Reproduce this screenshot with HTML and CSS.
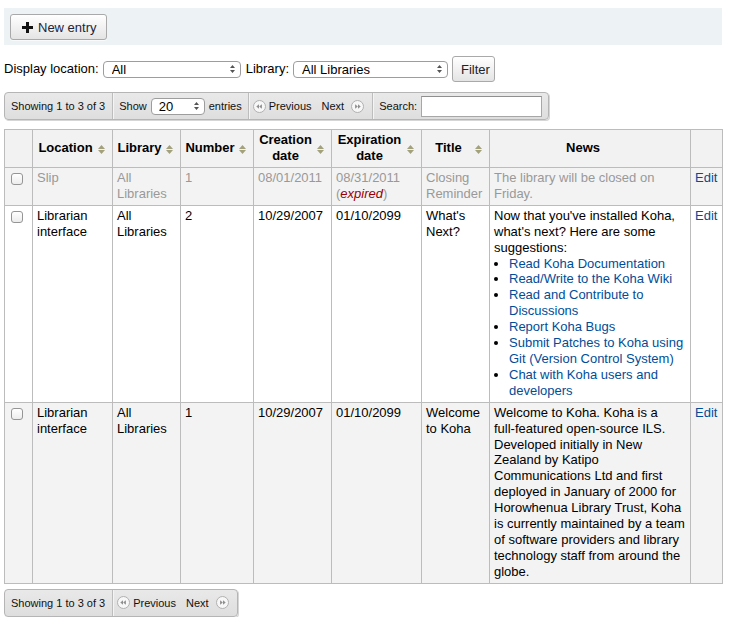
FILE: index.html
```html
<!DOCTYPE html>
<html>
<head>
<meta charset="utf-8">
<link rel="stylesheet" href="styles.css">
</head>
<body>
<div class="page">
  <div class="toolbar">
    <button class="btn btn-new"><svg class="plus" width="11" height="11" viewBox="0 0 11 11"><rect x="4" y="0" width="3" height="11" fill="#111"/><rect x="0" y="4" width="11" height="3" fill="#111"/></svg>New entry</button>
  </div>

  <form class="filters">
    <label class="lbl">Display location:</label>
    <span class="sel sel-loc"><select><option>All</option></select><svg class="updown" width="5" height="8" viewBox="0 0 5 8"><path d="M0 3 L2.5 0 L5 3Z M0 5 L5 5 L2.5 8Z" fill="#555"/></svg></span>
    <label class="lbl">Library:</label>
    <span class="sel sel-lib"><select><option>All Libraries</option></select><svg class="updown" width="5" height="8" viewBox="0 0 5 8"><path d="M0 3 L2.5 0 L5 3Z M0 5 L5 5 L2.5 8Z" fill="#555"/></svg></span>
    <button type="button" class="btn btn-filter">Filter</button>
  </form>

  <div class="pager pager-top">
    <div class="seg seg-info">Showing 1 to 3 of 3</div>
    <div class="seg seg-len">Show <span class="sel sel-len"><select><option>20</option></select><svg class="updown" width="5" height="8" viewBox="0 0 5 8"><path d="M0 3 L2.5 0 L5 3Z M0 5 L5 5 L2.5 8Z" fill="#555"/></svg></span> entries</div>
    <div class="seg seg-nav">
      <svg class="navico" width="13" height="13" viewBox="0 0 13 13"><circle cx="6.5" cy="6.5" r="6" fill="#f7f7f7" stroke="#b0b0b0"/><path d="M3.3 6.5 L6 4.3 L6 8.7Z M6.2 6.5 L8.9 4.3 L8.9 8.7Z" fill="#8f8f8f"/></svg>
      <span class="navtxt">Previous</span>
      <span class="navtxt next">Next</span>
      <svg class="navico" width="13" height="13" viewBox="0 0 13 13"><circle cx="6.5" cy="6.5" r="6" fill="#f7f7f7" stroke="#b0b0b0"/><path d="M9.7 6.5 L7 4.3 L7 8.7Z M6.8 6.5 L4.1 4.3 L4.1 8.7Z" fill="#8f8f8f"/></svg>
    </div>
    <div class="seg seg-search">Search: <input type="text" class="search"></div>
  </div>

  <table class="news">
    <colgroup>
      <col style="width:28px"><col style="width:80px"><col style="width:68px"><col style="width:73px"><col style="width:78px"><col style="width:90px"><col style="width:68px"><col style="width:201px"><col style="width:32px">
    </colgroup>
    <thead>
      <tr>
        <th class="nosort"></th>
        <th>Location<svg class="sort" width="7" height="9" viewBox="0 0 7 9"><path d="M0 4 L3.5 0 L7 4Z M0 5 L7 5 L3.5 9Z" fill="#a3a07c"/></svg></th>
        <th>Library<svg class="sort" width="7" height="9" viewBox="0 0 7 9"><path d="M0 4 L3.5 0 L7 4Z M0 5 L7 5 L3.5 9Z" fill="#a3a07c"/></svg></th>
        <th>Number<svg class="sort" width="7" height="9" viewBox="0 0 7 9"><path d="M0 4 L3.5 0 L7 4Z M0 5 L7 5 L3.5 9Z" fill="#a3a07c"/></svg></th>
        <th>Creation date<svg class="sort" width="7" height="9" viewBox="0 0 7 9"><path d="M0 4 L3.5 0 L7 4Z M0 5 L7 5 L3.5 9Z" fill="#a3a07c"/></svg></th>
        <th>Expiration date<svg class="sort" width="7" height="9" viewBox="0 0 7 9"><path d="M0 4 L3.5 0 L7 4Z M0 5 L7 5 L3.5 9Z" fill="#a3a07c"/></svg></th>
        <th>Title<svg class="sort" width="7" height="9" viewBox="0 0 7 9"><path d="M0 4 L3.5 0 L7 4Z M0 5 L7 5 L3.5 9Z" fill="#a3a07c"/></svg></th>
        <th>News</th>
        <th class="nosort"></th>
      </tr>
    </thead>
    <tbody>
      <tr class="odd expired">
        <td><span class="cb"></span></td>
        <td>Slip</td>
        <td>All Libraries</td>
        <td>1</td>
        <td>08/01/2011</td>
        <td><span class="line">08/31/2011</span><span class="line">(<em class="exp">expired</em>)</span></td>
        <td>Closing Reminder</td>
        <td>The library will be closed on Friday.</td>
        <td><a href="#">Edit</a></td>
      </tr>
      <tr class="even">
        <td><span class="cb"></span></td>
        <td>Librarian interface</td>
        <td>All Libraries</td>
        <td>2</td>
        <td>10/29/2007</td>
        <td>01/10/2099</td>
        <td>What's Next?</td>
        <td>Now that you've installed Koha, what's next? Here are some suggestions:
          <ul class="links">
            <li><a href="#">Read Koha Documentation</a></li>
            <li><a href="#">Read/Write to the Koha Wiki</a></li>
            <li><a href="#">Read and Contribute to Discussions</a></li>
            <li><a href="#">Report Koha Bugs</a></li>
            <li><a href="#">Submit Patches to Koha using Git (Version Control System)</a></li>
            <li><a href="#">Chat with Koha users and developers</a></li>
          </ul>
        </td>
        <td><a href="#">Edit</a></td>
      </tr>
      <tr class="odd">
        <td><span class="cb"></span></td>
        <td>Librarian interface</td>
        <td>All Libraries</td>
        <td>1</td>
        <td>10/29/2007</td>
        <td>01/10/2099</td>
        <td>Welcome to Koha</td>
        <td><span class="line">Welcome to Koha. Koha is a</span>full&#8209;featured open-source ILS. Developed initially in New Zealand by Katipo Communications Ltd and first deployed in January of 2000 for Horowhenua Library Trust, Koha is currently maintained by a team of software providers and library technology staff from around the globe.</td>
        <td><a href="#">Edit</a></td>
      </tr>
    </tbody>
  </table>

  <div class="pager pager-bottom">
    <div class="seg seg-info">Showing 1 to 3 of 3</div>
    <div class="seg seg-nav">
      <svg class="navico" width="13" height="13" viewBox="0 0 13 13"><circle cx="6.5" cy="6.5" r="6" fill="#f7f7f7" stroke="#b0b0b0"/><path d="M3.3 6.5 L6 4.3 L6 8.7Z M6.2 6.5 L8.9 4.3 L8.9 8.7Z" fill="#8f8f8f"/></svg>
      <span class="navtxt">Previous</span>
      <span class="navtxt next">Next</span>
      <svg class="navico" width="13" height="13" viewBox="0 0 13 13"><circle cx="6.5" cy="6.5" r="6" fill="#f7f7f7" stroke="#b0b0b0"/><path d="M9.7 6.5 L7 4.3 L7 8.7Z M6.8 6.5 L4.1 4.3 L4.1 8.7Z" fill="#8f8f8f"/></svg>
    </div>
  </div>
</div>
</body>
</html>
```

FILE: styles.css
```css
* { box-sizing: border-box; }
html, body { margin: 0; padding: 0; background: #fff; }
body {
  font-family: "Liberation Sans", Arial, Helvetica, sans-serif;
  font-size: 13px;
  line-height: 16px;
  color: #000;
}
.page {
  width: 718px;
  margin-left: 4px;
  padding-top: 8px;
}
.toolbar {
  background: #edf3f5;
  padding: 6px 6px 5px;
  height: 37px;
}
.btn {
  font-family: "Liberation Sans", Arial, Helvetica, sans-serif;
  font-size: 13px;
  color: #222;
  border: 1px solid #a9a9a9;
  border-radius: 3px;
  background: linear-gradient(#ffffff, #e4e4e4);
  height: 26px;
  padding: 0 9px;
  display: inline-flex;
  align-items: center;
  margin: 0;
  box-shadow: 0 1px 0 rgba(255,255,255,0.6);
}
.btn-new { width: 97px; padding-left: 11px; color: #1a2540; }
.plus { margin-right: 5px; }
.filters {
  display: flex;
  align-items: center;
  margin: 11px 0 0;
  height: 26px;
}
.lbl { margin-right: 4px; }
.sel {
  position: relative;
  display: inline-block;
  height: 17px;
  flex: none;
}
.sel select {
  appearance: none;
  -webkit-appearance: none;
  font-family: "Liberation Sans", Arial, Helvetica, sans-serif;
  font-size: 13px;
  line-height: 15px;
  height: 17px;
  width: 100%;
  border: 1px solid #9d9d9d;
  border-radius: 4px;
  background: #fff;
  padding: 0 0 0 8px;
  margin: 0;
  color: #000;
  display: block;
}
.updown {
  position: absolute;
  right: 6px;
  top: 4px;
  pointer-events: none;
}
.sel-loc { width: 138px; margin-right: 5px; }
.sel-lib { width: 155px; margin-right: 4px; }
.btn-filter { width: 43px; padding: 0 0 0 8px; }
.pager {
  display: flex;
  width: max-content;
  height: 28px;
  margin-top: 10px;
  border: 1px solid #b5b5b5;
  border-radius: 4px;
  background: linear-gradient(#e9e9e9, #dedede);
  align-items: stretch;
  box-shadow: 1px 1px 0 #d6d6d6;
  font-size: 11px;
  line-height: 14px;
  color: #111;
}
.pager-bottom { margin-top: 5px; }
.seg {
  flex: none;
  display: flex;
  align-items: center;
  padding: 0 6px;
  border-left: 1px solid #bdbdbd;
  box-shadow: inset 1px 0 0 #f4f4f4;
  white-space: nowrap;
}
.seg:first-child { border-left: none; box-shadow: none; }
.seg-info { padding: 0 7px 0 6px; }
.sel-len { width: 54px; margin: 0 4px 0 4px; }
.sel-len select { font-size: 13px; padding-left: 7px; }
.seg-nav { padding: 0 8px 0 4px; }
.navico { flex: none; }
.navtxt { margin-left: 3px; }
.navtxt.next { margin-left: 10px; margin-right: 7px; }
.seg-search { padding: 0 6px 0 6px; }
.search {
  margin-left: 4px;
  width: 121px;
  height: 21px;
  border: 1px solid #a7a7a7;
  border-top-color: #8f8f8f;
  background: #fff;
  padding: 0 3px;
  font-family: inherit;
  font-size: 13px;
}
.news {
  margin-top: 9px;
  width: 718px;
  table-layout: fixed;
  border-collapse: collapse;
  border: 1px solid #bcbcbc;
}
.news th, .news td {
  border: 1px solid #bcbcbc;
  padding: 2px 4px 3px;
}
.news td { line-height: 15.9px; }
.news th {
  position: relative;
  font-weight: bold;
  text-align: center;
  vertical-align: middle;
  padding-right: 18px;
  background: #f2f2f2;
  height: 38px;
}
.news th.nosort { padding-right: 4px; }
.sort {
  position: absolute;
  right: 7px;
  top: 50%;
  margin-top: -4px;
}
.news td { vertical-align: top; }
.news tr.odd td { background: #f3f3f3; }
.news tr.even td { background: #fff; }
.news tr.expired td { color: #999; }
.news tr.expired td a { color: #004d99; }
.line { display: block; }
.exp { color: #990000; font-style: italic; }
a { color: #004d99; text-decoration: none; }
.cb {
  display: block;
  width: 12px;
  height: 12px;
  margin: 3px 0 0 2px;
  border: 1px solid #959595;
  border-radius: 3px;
  background: linear-gradient(#ffffff, #ececec);
}
.links {
  margin: 0;
  padding-left: 15px;
  list-style: disc;
}
```
